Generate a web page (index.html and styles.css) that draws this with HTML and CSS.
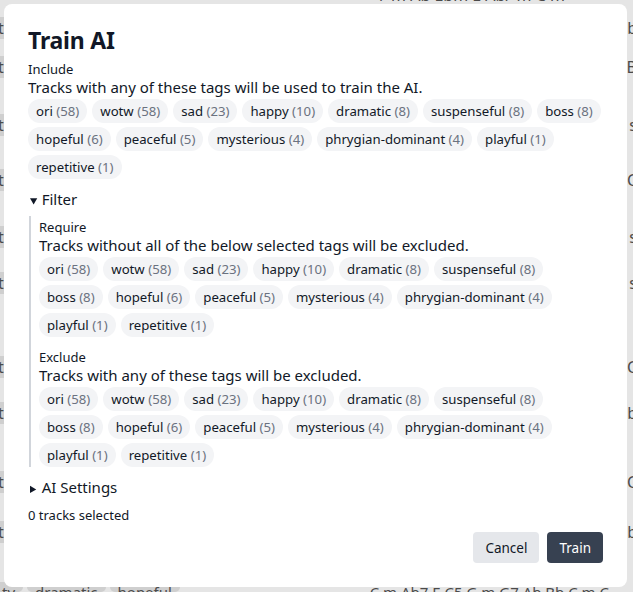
FILE: index.html
```html
<!DOCTYPE html>
<html>
<head>
<meta charset="utf-8">
<link rel="stylesheet" href="styles.css">
</head>
<body>
<div class="page">
  <div class="bg-top">/-m Ab Ebm E Ab/-m C m</div>
  <div class="bg-rows">
    <div class="bg-row r1"><span class="bg-l">t</span><span class="bg-r">b</span></div>
    <div class="bg-row r2"><span class="bg-l">t</span><span class="bg-r">B</span></div>
    <div class="bg-row r3"><span class="bg-l">t</span><span class="bg-r">s</span></div>
    <div class="bg-row r4"><span class="bg-l">t</span><span class="bg-r">C</span></div>
    <div class="bg-row r5"><span class="bg-l">t</span><span class="bg-r">s</span></div>
    <div class="bg-row r6"><span class="bg-l">t</span><span class="bg-r">s</span></div>
    <div class="bg-row r7"><span class="bg-l">t</span><span class="bg-r">C</span></div>
    <div class="bg-row r8"><span class="bg-l">t</span><span class="bg-r">b</span></div>
    <div class="bg-row r9"><span class="bg-l">t</span><span class="bg-r">C</span></div>
    <div class="bg-row r10"><span class="bg-l">t</span><span class="bg-r">b</span></div>
  </div>
  <div class="bg-bottom">
    <div class="bg-tags"><span class="bg-tag">ty</span><span class="bg-tag">dramatic</span><span class="bg-tag">hopeful</span></div>
    <div class="bg-chords">C m Ab7 E C5 G m G7 Ab Bb C m C</div>
  </div>
</div>

<div class="overlay">
  <div class="dialog">
    <h1 class="title">Train AI</h1>

    <section class="group">
      <div class="label">Include</div>
      <p class="desc">Tracks with any of these tags will be used to train the AI.</p>
      <div class="tags">
        <span class="tag">ori <span class="count">(58)</span></span>
        <span class="tag">wotw <span class="count">(58)</span></span>
        <span class="tag">sad <span class="count">(23)</span></span>
        <span class="tag">happy <span class="count">(10)</span></span>
        <span class="tag">dramatic <span class="count">(8)</span></span>
        <span class="tag">suspenseful <span class="count">(8)</span></span>
        <span class="tag">boss <span class="count">(8)</span></span>
        <span class="tag">hopeful <span class="count">(6)</span></span>
        <span class="tag">peaceful <span class="count">(5)</span></span>
        <span class="tag">mysterious <span class="count">(4)</span></span>
        <span class="tag">phrygian-dominant <span class="count">(4)</span></span>
        <span class="tag">playful <span class="count">(1)</span></span>
        <span class="tag">repetitive <span class="count">(1)</span></span>
      </div>
    </section>

    <details class="section" open>
      <summary class="summary">Filter</summary>
      <div class="filter-body">
        <section class="group">
          <div class="label">Require</div>
          <p class="desc">Tracks without all of the below selected tags will be excluded.</p>
          <div class="tags">
            <span class="tag">ori <span class="count">(58)</span></span>
            <span class="tag">wotw <span class="count">(58)</span></span>
            <span class="tag">sad <span class="count">(23)</span></span>
            <span class="tag">happy <span class="count">(10)</span></span>
            <span class="tag">dramatic <span class="count">(8)</span></span>
            <span class="tag">suspenseful <span class="count">(8)</span></span>
            <span class="tag">boss <span class="count">(8)</span></span>
            <span class="tag">hopeful <span class="count">(6)</span></span>
            <span class="tag">peaceful <span class="count">(5)</span></span>
            <span class="tag">mysterious <span class="count">(4)</span></span>
            <span class="tag">phrygian-dominant <span class="count">(4)</span></span>
            <span class="tag">playful <span class="count">(1)</span></span>
            <span class="tag">repetitive <span class="count">(1)</span></span>
          </div>
        </section>
        <section class="group">
          <div class="label">Exclude</div>
          <p class="desc">Tracks with any of these tags will be excluded.</p>
          <div class="tags">
            <span class="tag">ori <span class="count">(58)</span></span>
            <span class="tag">wotw <span class="count">(58)</span></span>
            <span class="tag">sad <span class="count">(23)</span></span>
            <span class="tag">happy <span class="count">(10)</span></span>
            <span class="tag">dramatic <span class="count">(8)</span></span>
            <span class="tag">suspenseful <span class="count">(8)</span></span>
            <span class="tag">boss <span class="count">(8)</span></span>
            <span class="tag">hopeful <span class="count">(6)</span></span>
            <span class="tag">peaceful <span class="count">(5)</span></span>
            <span class="tag">mysterious <span class="count">(4)</span></span>
            <span class="tag">phrygian-dominant <span class="count">(4)</span></span>
            <span class="tag">playful <span class="count">(1)</span></span>
            <span class="tag">repetitive <span class="count">(1)</span></span>
          </div>
        </section>
      </div>
    </details>

    <details class="section">
      <summary class="summary">AI Settings</summary>
    </details>

    <div class="status">0 tracks selected</div>

    <div class="actions">
      <button class="btn btn-cancel">Cancel</button>
      <button class="btn btn-primary">Train</button>
    </div>
  </div>
</div>
</body>
</html>
```

FILE: styles.css
```css
* { box-sizing: border-box; }

html, body {
  margin: 0;
  padding: 0;
  height: 100%;
}

body {
  font-family: "Noto Sans", "DejaVu Sans", sans-serif;
  background: #e5e5e5;
  color: #111827;
  overflow: hidden;
}

/* ---------- background page (dimmed) ---------- */
.page {
  height: 100%;
  display: flex;
  flex-direction: column;
  color: #4b4b4b;
  font-size: 16px;
}

.bg-top {
  margin-top: -15px;
  padding-left: 380px;
  line-height: 20px;
}

.bg-rows {
  display: flex;
  flex-direction: column;
  flex: 1;
  padding-top: 12px;
}

.bg-row {
  display: flex;
  justify-content: space-between;
  height: 22px;
  line-height: 22px;
}

.r1 { margin-top: 0; }
.r2 { margin-top: 17px; }
.r3 { margin-top: 36px; }
.r4 { margin-top: 33px; }
.r5 { margin-top: 35px; }
.r6 { margin-top: 24px; }
.r7 { margin-top: 62px; }
.r8 { margin-top: 24px; }
.r9 { margin-top: 47px; }
.r10 { margin-top: 28px; }

.bg-l {
  background: #cfcfcf;
  padding: 0 2px 0 0;
  margin-left: -2px;
}

.bg-r {
  margin-right: -4px;
}

.bg-bottom {
  display: flex;
  justify-content: space-between;
  height: 10px;
  line-height: 20px;
  font-size: 15px;
}

.bg-tags {
  display: flex;
  gap: 4px;
  margin-left: -6px;
}

.bg-tag {
  background: #cfcfcf;
  border-radius: 10px;
  padding: 0 8px;
}

.bg-chords {
  padding-right: 24px;
}

/* ---------- modal ---------- */
.overlay {
  position: fixed;
  inset: 0;
  display: flex;
  align-items: flex-start;
  justify-content: center;
  padding: 4px 6px 0 4px;
}

.dialog {
  width: 623px;
  height: 583px;
  background: #ffffff;
  border-radius: 8px;
  padding: 24px;
  display: flex;
  flex-direction: column;
  color: #111827;
}

.title {
  margin: 0 0 9px;
  font-size: 23px;
  line-height: 24px;
  font-weight: 700;
  letter-spacing: -0.2px;
}

.group {
  display: flex;
  flex-direction: column;
}

.label {
  font-size: 13px;
  line-height: 17px;
  color: #111827;
}

.desc {
  margin: 0 0 3px;
  font-size: 15px;
  line-height: 18px;
  color: #111827;
}

.tags {
  display: flex;
  flex-wrap: wrap;
  gap: 4px 5px;
}

.tag {
  display: inline-flex;
  align-items: center;
  height: 24px;
  padding: 0 8px;
  border-radius: 12px;
  background: #f3f4f6;
  font-size: 13.2px;
  color: #111827;
  white-space: pre;
}

.count {
  color: #6b7280;
}

.section {
  margin-top: 8px;
}

.summary {
  font-size: 15px;
  line-height: 24px;
  height: 24px;
  overflow: hidden;
  cursor: pointer;
  padding-left: 2px;
}

.summary::marker {
  font-size: 11px;
}

.filter-body {
  margin-top: 5px;
  border-left: 2px solid #d1d5db;
  padding: 3px 0 0 8px;
  margin-left: 1px;
  display: flex;
  flex-direction: column;
  gap: 12px;
}

.status {
  margin-top: 6px;
  font-size: 13px;
  line-height: 20px;
}

.actions {
  margin-top: auto;
  display: flex;
  justify-content: flex-end;
  gap: 8px;
}

.btn {
  font-family: inherit;
  font-size: 13.5px;
  height: 31px;
  padding: 0 12px;
  border: none;
  border-radius: 4px;
  cursor: pointer;
}

.btn-cancel {
  background: #e5e7eb;
  color: #111827;
}

.btn-primary {
  background: #374151;
  color: #ffffff;
}
```
